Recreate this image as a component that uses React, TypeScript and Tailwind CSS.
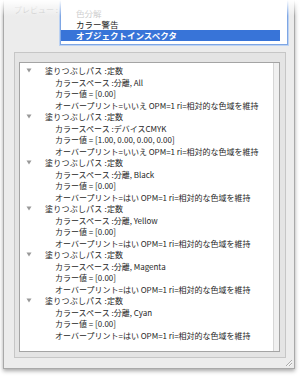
import React from "react";

const groups = [
  {
    space: "カラースペース :分離, All",
    value: "カラー値 = [0.00]",
    op: "オーバープリント=いいえ OPM=1 ri=相対的な色域を維持",
  },
  {
    space: "カラースペース :デバイスCMYK",
    value: "カラー値 = [1.00, 0.00, 0.00, 0.00]",
    op: "オーバープリント=いいえ OPM=1 ri=相対的な色域を維持",
  },
  {
    space: "カラースペース :分離, Black",
    value: "カラー値 = [0.00]",
    op: "オーバープリント=はい OPM=1 ri=相対的な色域を維持",
  },
  {
    space: "カラースペース :分離, Yellow",
    value: "カラー値 = [0.00]",
    op: "オーバープリント=はい OPM=1 ri=相対的な色域を維持",
  },
  {
    space: "カラースペース :分離, Magenta",
    value: "カラー値 = [0.00]",
    op: "オーバープリント=はい OPM=1 ri=相対的な色域を維持",
  },
  {
    space: "カラースペース :分離, Cyan",
    value: "カラー値 = [0.00]",
    op: "オーバープリント=はい OPM=1 ri=相対的な色域を維持",
  },
];

function Disclosure() {
  return (
    <svg width="6" height="5" viewBox="0 0 6 5" className="shrink-0">
      <path d="M0.5 0.5 L5.5 0.5 L3 4.5 Z" fill="#999999" />
    </svg>
  );
}

function App() {
  return (
    <div
      className="relative w-[300px] h-[376px] bg-white pl-[3px] pr-[5px] pb-[7px] overflow-hidden"
      style={{ fontFamily: '"Noto Sans CJK JP", "Noto Sans", sans-serif' }}
    >
      <div className="relative flex flex-col h-full bg-[#ececec] border-x border-b border-[#a9a9a9] shadow-[0_2px_4px_rgba(0,0,0,0.35)]">
        {/* preview selector */}
        <div className="flex">
          <div className="w-[56px] pl-[10px] pt-[5px] text-[8px] leading-[10px] text-[#c8c8c8] whitespace-nowrap">
            プレビュー :
          </div>
          <div className="w-[228px] h-[45px] bg-white border-x border-b border-[#7ea6e4] shadow-[0_0_0_1px_#bcd2f2] pt-[8px] text-[8.5px]">
            <div className="h-[11px] leading-[11px] pl-[15px] text-[#c8c8c8]">
              色分解
            </div>
            <div className="h-[11px] leading-[11px] pl-[15px] text-[#1e1e1e]">
              カラー警告
            </div>
            <div className="h-[11px] leading-[11px] pl-[15px] mr-[7px] bg-[#3874d8] text-white font-bold">
              オブジェクトインスペクタ
            </div>
          </div>
        </div>

        {/* group box */}
        <div className="flex-1 mt-[7px] ml-[10px] mr-[8px] mb-[10px] flex flex-col bg-[#e4e4e4] border border-[#c6c6c6] pt-[9px] pl-[4px] pr-[5px] pb-[5px]">
          <div className="flex-1 flex bg-white border border-[#a4a4a4]">
            <div className="flex-1 pt-[2px] text-[8px] text-[#262626]">
              {groups.map((g, i) => (
                <div key={i}>
                  <div className="flex items-center h-[11.5px] pl-[6px]">
                    <Disclosure />
                    <span className="ml-[13px] whitespace-nowrap tracking-[0.2px]">
                      塗りつぶしパス :定数
                    </span>
                  </div>
                  <div className="h-[11.5px] leading-[11.5px] pl-[35px] whitespace-nowrap">
                    {g.space}
                  </div>
                  <div className="h-[11.5px] leading-[11.5px] pl-[35px] whitespace-nowrap">
                    {g.value}
                  </div>
                  <div className="h-[11.5px] leading-[11.5px] pl-[35px] whitespace-nowrap">
                    {g.op}
                  </div>
                </div>
              ))}
            </div>
            <div className="w-[6px] bg-[#f0f0f0] border-l border-[#d6d6d6]" />
          </div>
        </div>

        {/* resize grip */}
        <svg
          width="8"
          height="8"
          viewBox="0 0 8 8"
          className="absolute right-[1px] bottom-[1px]"
        >
          <path d="M1 7 L7 1 M4 7 L7 4" stroke="#9a9a9a" strokeWidth="0.8" />
          <path d="M2 7 L7 2 M5 7 L7 5" stroke="#ffffff" strokeWidth="0.6" />
        </svg>
      </div>

      {/* fade at the cut top edge */}
      <div className="absolute inset-x-0 top-0 h-[16px] bg-gradient-to-b from-white to-transparent" />
    </div>
  );
}

export default App;
